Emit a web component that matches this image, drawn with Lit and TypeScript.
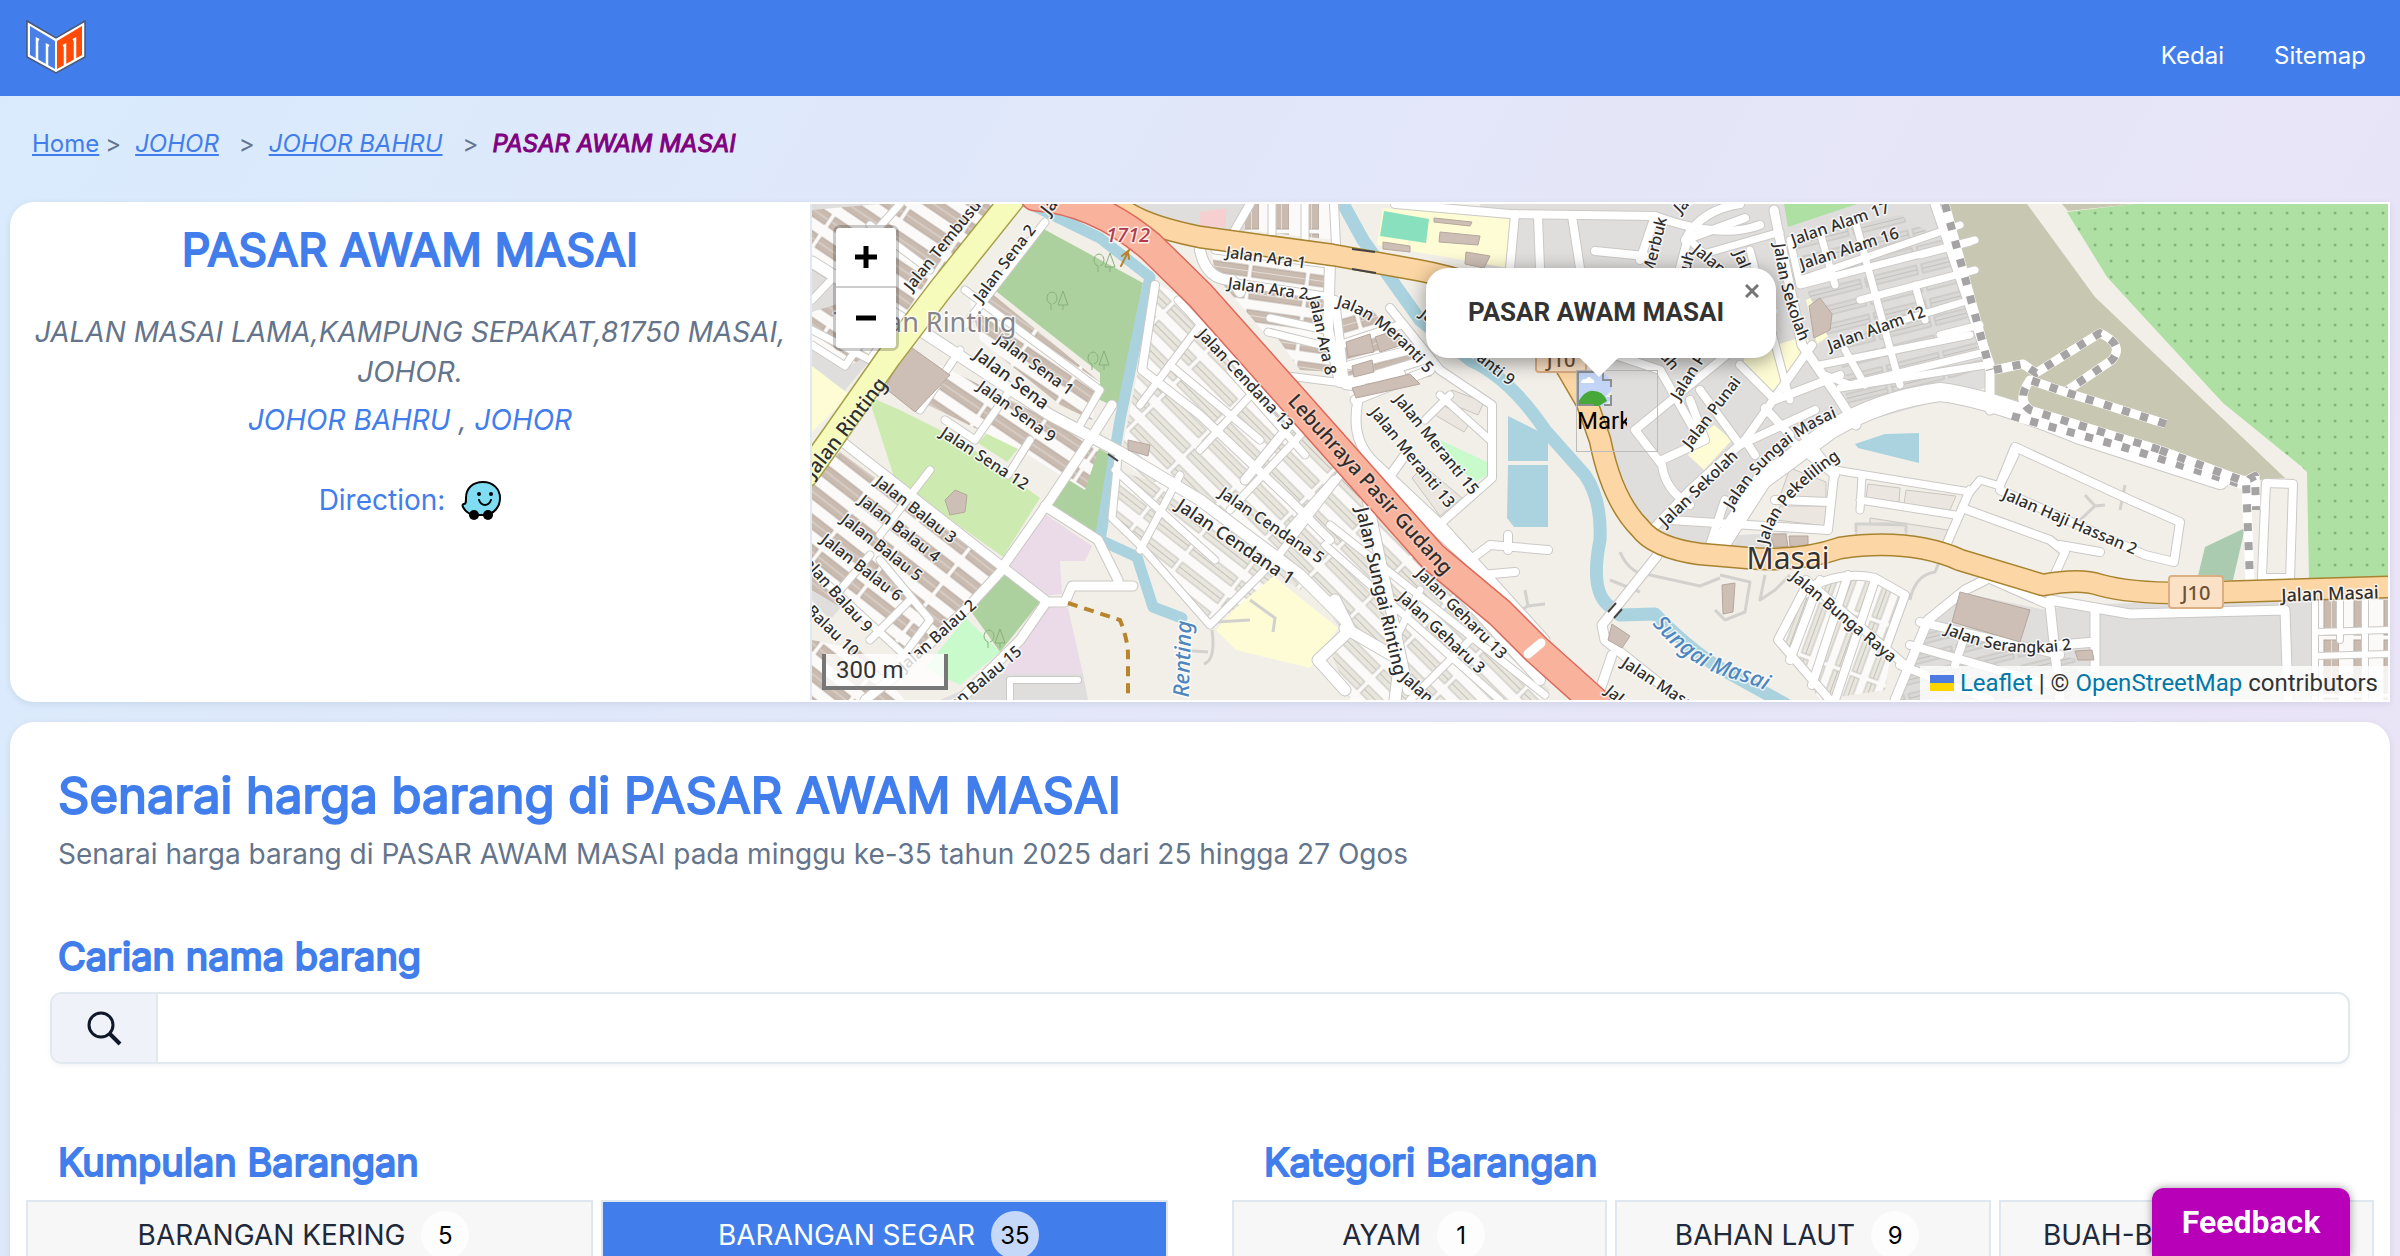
import { LitElement, html, svg, css } from "lit";
import { customElement, state } from "lit/decorators.js";

type Label = [text: string, x: number, y: number, angle: number, kind?: string];

/* Flat land-use areas: class name, polygon points */
const AREAS: [string, string][] = [
  ["resid", "1100,204 1245,204 1245,232 1150,222"],
  ["resid", "1480,204 1948,204 1990,365 1996,385 1852,425 1800,455 1700,545 1640,520 1608,440 1560,330 1480,300"],
  ["resid", "812,204 1000,204 812,430"],
  ["resid", "812,495 880,560 830,620 812,600"],
  ["school", "812,366 850,395 812,432"],
  ["grass", "868,396 900,410 960,440 1040,498 1003,557 895,480"],
  ["grass", "990,430 1012,418 1028,437 1007,462 978,443"],
  ["forest", "1040,227 1143,283 1118,408 1100,400 1100,373 992,288"],
  ["forest", "1088,442 1112,456 1098,535 1048,508"],
  ["forest", "1003,572 1040,602 1000,652 970,610"],
  ["park", "966,618 1000,652 960,685 925,668"],
  ["park", "857,572 880,582 877,595"],
  ["pink", "1045,514 1092,546 1085,561 1060,561 1062,594 1042,596 1010,566"],
  ["pink", "1042,606 1068,608 1083,674 1003,674"],
  ["resid", "940,700 1000,674 1083,674 1088,700"],
  ["school", "1383,208 1510,216 1508,268 1377,245"],
  ["pitch", "1384,211 1429,219 1426,243 1380,236"],
  ["school", "1272,575 1338,628 1310,668 1236,650 1216,630 1250,590"],
  ["school", "1745,355 1805,336 1812,345 1772,392 1742,370"],
  ["school", "1806,300 1835,288 1846,324 1817,344"],
  ["school", "1700,436 1714,425 1732,440 1704,470 1688,455"],
  ["park", "1440,440 1487,462 1487,475 1476,482 1450,462"],
  ["rose", "1200,212 1226,208 1226,227 1200,227"],
  ["orchard", "1784,204 1857,204 1788,227"],
  ["khaki", "1948,204 2027,204 2095,297 2285,478 2260,480 2012,412 1996,404 1990,363"],
  ["khaki", "2062,204 2133,204 2068,211"],
  ["orchard", "2067,212 2133,204 2388,204 2388,578 2309,580 2307,472 2302,467 2223,403 2107,277"],
  ["dots", "2067,212 2133,204 2388,204 2388,578 2309,580 2307,472 2302,467 2223,403 2107,277"],
  ["wood", "2205,547 2245,528 2233,580 2197,580"],
  ["water", "1508,416 1548,436 1548,461 1508,461"],
  ["water", "1508,465 1548,465 1548,527 1514,527 1507,518"],
  ["water", "1855,444 1885,434 1919,433 1919,463 1858,448"],
  ["resid", "1650,530 1740,535 1828,530 1828,500 1770,548 1660,545"],
  ["resid", "1930,625 1968,594 2046,610 2070,605 2388,595 2388,700 1895,700 1910,650"],
];

/* Housing rows drawn with striped fills */
const BLOCKS: [string, string][] = [
  ["rowsA", "812,210 880,204 995,204 900,325 812,270"],
  ["rowsA", "812,312 850,300 880,350 850,365 812,345"],
  ["rowsB", "840,452 1000,570 905,660 870,625 812,590 812,480"],
  ["rowsB", "812,640 860,650 905,700 812,700"],
  ["rowsA", "970,300 990,292 1100,382 1092,420 1060,405 980,340"],
  ["rowsA", "940,365 1100,445 1085,490 1020,450 928,405"],
  ["rowsC", "1212,253 1328,262 1320,345 1262,330 1215,275"],
  ["rowsC", "1265,320 1322,335 1334,372 1300,370"],
  ["rowsD", "1245,204 1338,204 1336,240 1245,230"],
  ["rowsE", "1335,310 1372,310 1432,376 1350,396"],
  ["rowsG", "1158,284 1195,306 1300,420 1362,494 1330,560 1300,590 1120,460 1142,350"],
  ["rowsG", "1330,505 1370,500 1550,690 1540,700 1350,700 1330,650 1342,630 1300,575"],
  ["rowsH", "1115,470 1180,490 1275,575 1212,628 1145,555 1112,520"],
  ["rowsI", "1795,240 1900,215 1958,250 1978,350 1850,385 1800,275"],
  ["rowsI", "1845,390 1980,350 1988,366 1850,415"],
  ["rowsJ", "1805,590 1850,575 1900,595 1885,690 1820,700 1778,640"],
  ["rowsI", "1915,640 1930,620 2000,640 2080,660 2070,700 1900,700"],
  ["rowsD", "2318,600 2388,600 2388,700 2318,700"],
];

/* Single footprints */
const BUILDINGS = [
  "885,388 908,345 950,375 915,412",
  "945,500 955,490 967,495 965,512 950,515",
  "1128,440 1150,445 1148,456 1128,450",
  "1770,534 1786,534 1788,547 1774,547",
  "1789,536 1808,536 1808,548 1790,546",
  "1722,585 1735,583 1733,612 1723,614",
  "1612,624 1630,636 1622,648 1608,640",
  "1960,592 2030,610 2020,642 1952,622",
  "1434,218 1472,222 1470,226 1434,222",
  "1440,232 1480,236 1478,245 1439,242",
  "1383,242 1410,246 1410,252 1383,249",
  "1466,252 1490,256 1484,268 1465,264",
  "1346,342 1370,334 1374,352 1348,357",
  "1375,337 1396,330 1402,345 1380,352",
  "1352,366 1372,360 1374,372 1354,377",
  "1352,388 1410,374 1420,384 1356,398",
  "1809,306 1820,298 1832,314 1830,330 1814,338",
  "2075,651 2092,650 2094,660 2078,660",
];

/* Open plots between the streets, outlined only */
const PLOTS = [
  "1442,400 1452,390 1484,402 1478,415",
  "1430,412 1440,404 1472,420 1464,432",
  "1412,478 1424,466 1462,498 1440,516",
  "1388,492 1398,484 1430,514 1420,520",
  "1868,484 1900,488 1899,502 1866,498",
  "1906,490 1956,496 1950,510 1904,504",
  "1870,518 1948,530 1942,544 1870,536",
  "1856,524 1906,526 1906,536 1856,536",
  "1790,468 1826,482 1826,498 1780,496",
  "1780,506 1826,506 1826,526 1776,520",
];

/* Minor roads: width, path */
const ROADS: [number, string][] = [
  [11, "M812 262 L920 330 L1050 415 L1120 452 L1200 500 L1300 575 L1345 620"],
  [9, "M840 440 L1004 568 L1045 600"],
  [9, "M1004 565 L1050 500 L1090 440 L1112 405"],
  [9, "M1045 506 L1098 540 L1118 580"],
  [9, "M1045 602 L1065 602 L1072 586 L1133 586"],
  [9, "M1004 568 L970 605 L900 672 L865 700"],
  [9, "M1045 604 L1020 640 L960 700"],
  [6, "M1012 680 L1078 680 M1010 680 L1010 700"],
  [7, "M900 204 L850 260 L812 300 M870 225 L930 270 M812 330 L870 360 L880 345"],
  [7, "M812 345 L845 366 L870 330"],
  [7, "M1045 222 L1000 280 L965 325 M965 290 L1100 390 L1080 425"],
  [7, "M960 350 L920 410 M1010 390 L975 440 L945 420 M1030 440 L1008 475"],
  [7, "M870 555 L840 590 M880 560 L930 620 L900 660 M910 600 L870 640"],
  [7, "M812 570 L910 660 M930 470 L880 535"],
  [8, "M1155 285 L1142 370 L1200 415 L1290 500 L1330 540"],
  [7, "M1200 325 L1140 405 M1260 385 L1200 450 M1305 430 L1230 510 M1340 475 L1275 560"],
  [7, "M1178 300 L1300 432 M1118 458 L1112 518 L1140 545 L1210 625 L1270 565"],
  [7, "M1230 370 L1305 455 M1170 365 L1260 440 M1115 470 L1215 560 M1180 475 L1140 550"],
  [10, "M1185 270 L1300 400 L1365 488 L1540 680"],
  [10, "M1365 488 L1408 690"],
  [7, "M1325 545 L1500 700 M1330 525 L1545 695 M1420 590 L1390 650 M1470 640 L1410 700"],
  [11, "M1335 600 L1350 630 L1318 660 L1345 690 M1345 628 L1400 660 L1395 700"],
  [9, "M1335 480 L1290 530 M1290 425 L1245 480"],
  [10, "M1200 250 Q1206 280 1232 280 L1240 292 M1330 262 L1328 330 L1340 382 L1400 374"],
  [7, "M1215 250 L1328 264 M1230 282 L1325 296 M1270 318 L1325 330 M1268 332 L1325 346"],
  [7, "M1240 330 L1280 375 L1335 382 M1272 204 L1272 235 M1305 204 L1305 240"],
  [8, "M1334 204 L1336 245 M1235 230 L1250 204"],
  [8, "M1335 300 L1345 385 L1380 390 M1340 345 L1400 325 M1350 365 L1418 348 M1345 384 L1424 360"],
  [8, "M1390 308 L1440 370 L1492 405 L1492 478 L1440 524"],
  [9, "M1358 400 Q1350 440 1374 462 L1440 524 M1430 370 L1355 400 M1405 455 L1380 490"],
  [7, "M1450 395 L1425 420 M1490 440 L1440 395"],
  [9, "M1440 524 L1545 640 M1372 470 L1470 562 L1500 592 M1545 640 L1530 625"],
  [8, "M1470 560 L1490 545 L1548 550 M1508 550 L1508 535 M1480 575 L1515 572"],
  [8, "M1395 204 L1510 214 L1655 216 Q1720 240 1760 225"],
  [8, "M1515 214 L1510 268 M1538 216 L1540 268 M1572 216 L1580 268 M1595 251 L1645 256"],
  [8, "M1655 216 L1640 260 M1685 240 Q1700 210 1740 204 M1685 240 L1745 218 M1688 238 L1680 268"],
  [7, "M1690 240 L1740 290 M1700 255 L1780 232 M1750 250 L1790 400"],
  [9, "M1774 210 L1780 240 L1802 345 L1840 400 L1856 425"],
  [7, "M1790 240 L1800 285 L1975 240 M1820 232 L1835 285 M1855 220 L1900 385 M1800 280 L1960 225"],
  [7, "M1860 300 L1975 270 M1915 285 L1925 320 M1870 330 L1970 300 M1820 365 L1970 335 M1845 350 L1865 385 M1825 375 L1850 385 L1985 352"],
  [7, "M1920 255 L1970 242 M1940 335 L1980 325 M1840 388 L1985 365"],
  [9, "M1935 204 L1990 365 L1990 410"],
  [18, "M1720 545 L1762 480 L1830 430 Q1880 400 1940 392 Q1990 398 2080 435 L2220 480"],
  [8, "M1600 350 L1660 370 L1700 440 M1812 345 L1745 440 L1690 490 L1650 532"],
  [8, "M1740 365 L1775 400 L1840 375 M1765 408 L1790 435 M1700 390 L1740 445 L1815 410"],
  [8, "M1635 430 L1690 385 L1745 340 M1635 430 L1662 465 Q1665 490 1690 505"],
  [8, "M1662 460 L1705 440 L1690 400 M1745 440 L1755 455 M1790 440 L1835 475"],
  [8, "M1670 520 L1828 530 L1834 475 L1800 430 M1710 545 L1725 500 M1775 500 L1830 502"],
  [7, "M1835 470 L1970 492 L1980 480 L2000 486 L2015 455 M1862 475 L1860 510 M1860 500 L1955 515"],
  [8, "M1970 490 L1945 548 M1962 508 L2050 540 L2065 552 L2050 585"],
  [8, "M2000 484 L2015 447 L2130 500 L2180 522 L2174 562 L2145 555 L2000 490 M2060 545 L2100 552"],
  [8, "M2262 575 L2266 483 L2293 484 L2290 580 M2262 578 L2290 578"],
  [9, "M1657 556 L1602 625 L1605 640 L1680 700 M1612 655 L1600 690"],
  [8, "M1804 590 Q1840 570 1875 578 L1905 595 L1885 650 M1804 590 L1778 640 L1830 700"],
  [8, "M1820 580 L1790 660 M1848 575 L1812 685 M1875 580 L1835 700 M1806 580 L1905 665"],
  [9, "M1985 580 L1965 590 L1928 620 L1895 700 M1982 575 L2050 605 L2060 700"],
  [8, "M1920 622 L2060 655 M1910 645 L2050 685 M1965 635 L1955 665 M1900 665 L1990 700"],
  [9, "M2050 600 L2130 614 L2285 610 L2288 700 M2095 610 L2095 700 M2060 645 L2095 642"],
  [6, "M2315 600 L2315 700 M2340 600 L2340 640 M2365 600 L2365 700 M2315 632 L2388 630 M2315 656 L2388 654"],
];

const RIVERS: [number, string][] = [
  [11, "M1026 202 L1100 238 L1150 277 L1140 323 L1120 420 L1100 540 L1137 557 L1153 607 L1182 618"],
  [13, "M1341 200 L1363 240 L1420 320 L1470 360 Q1510 378 1545 430 L1585 475 Q1602 500 1600 540 Q1590 590 1608 605 L1620 615 L1655 614 Q1690 650 1720 668 L1785 704"],
];

const DASHES: [string, string][] = [
  ["dirt", "M1068 603 L1120 620 Q1128 640 1128 655 L1128 700"],
  ["rail", "M1945 204 L1990 370"],
  ["rail", "M1994 370 L2023 364 L2036 373 L2100 333 Q2125 345 2112 360 L2065 392"],
  ["rail", "M2166 424 L2065 392 L2030 380 Q2016 400 2030 410 L2160 450"],
  ["rail", "M2012 416 L2120 446 L2240 484 L2255 476 L2256 510"],
  ["rail", "M2160 450 L2246 482 L2250 580"],
];

/* Footpaths and service ways */
const PATHS = [
  "M1620 552 Q1630 575 1650 575 L1700 586 L1720 578",
  "M1720 575 L1750 582 L1745 612 L1725 620 L1715 610",
  "M1610 580 L1640 592 M1765 575 L1760 600 L1775 590 L1790 575",
  "M1250 600 L1275 618 L1273 632 M1216 622 L1250 620",
  "M1525 590 L1528 606 L1545 604 M1528 606 L1518 612",
  "M2085 495 L2095 506 L2105 505 M2095 506 L2080 520 M2125 485 L2120 510",
  "M1212 630 Q1216 660 1204 664 M1180 650 L1208 652",
  "M1856 532 L1856 524 L1906 524 L1906 532",
  "M1910 600 Q1915 575 1935 572 L1940 560",
];

const HIGHWAY = "M1035 196 Q1095 200 1150 246 L1200 295 L1338 450 L1433 557 L1500 613 L1537 650 L1595 702";
const TRUNK = "M1118 206 Q1140 225 1200 237 L1333 255 L1417 270 Q1530 290 1562 360 L1587 403 L1600 440 Q1612 500 1640 528 Q1655 548 1700 554 L1747 558 Q1800 562 1840 548 Q1910 538 1960 560 L2043 585 Q2080 578 2100 585 Q2140 596 2223 592 L2390 587";
const RINTING = "M1012 200 L940 290 L889 357 L833 437 L806 475";

const LABELS: Label[] = [
  ["Jalan Tembusu", 942, 245, -51],
  ["Jalan Sena 2", 1004, 263, -53],
  ["Jalan Sena 1", 1035, 364, 36],
  ["Jalan Sena", 1012, 378, 37, "mid"],
  ["Jalan Sena 9", 1017, 411, 36],
  ["Jalan Sena 12", 985, 458, 33],
  ["Jalan Rinting", 845, 427, -52, "big"],
  ["Jalan Balau 3", 916, 509, 38],
  ["Jalan Balau 4", 900, 528, 38],
  ["Jalan Balau 5", 882, 547, 38],
  ["Jalan Balau 6", 862, 567, 38],
  ["Jalan Balau 9", 837, 593, 48],
  ["Jalan Balau 10", 818, 616, 44],
  ["Jalan Balau 2", 937, 635, -42],
  ["Jalan Balau 15", 978, 683, -40],
  ["Jalan Cendana 13", 1246, 379, 47],
  ["Jalan Cendana 5", 1272, 525, 34],
  ["Jalan Cendana 1", 1236, 541, 34, "mid"],
  ["Jalan Ara 1", 1266, 257, 8],
  ["Jalan Ara 2", 1268, 288, 8],
  ["Jalan Ara 8", 1323, 335, 78],
  ["Jalan Meranti 9", 1468, 346, 38],
  ["Jalan Meranti 15", 1437, 444, 51],
  ["Jalan Meranti 13", 1413, 457, 51],
  ["Jalan Sungai Rinting", 1382, 591, 77, "mid"],
  ["Jalan Geharu 13", 1462, 613, 45],
  ["Jalan Geharu 3", 1442, 632, 43],
  ["Jalan Geharu 1", 1445, 712, 42],
  ["Lebuhraya Pasir Gudang", 1371, 484, 48, "big"],
  ["Jalan Merbuk", 1649, 266, -76],
  ["Jalan Merpati", 1712, 174, -45],
  ["Jalan Subuh", 1677, 294, -74],
  ["Jalan Tekukur", 1735, 280, 40],
  ["Jalan Tiong", 1755, 290, 68],
  ["Jalan Tengah", 1645, 330, 50],
  ["Jalan Pipit", 1694, 366, -58],
  ["Jalan Punai", 1711, 412, -53],
  ["Jalan Alam 17", 1840, 223, -19],
  ["Jalan Alam 16", 1849, 248, -18],
  ["Jalan Alam 12", 1876, 328, -20],
  ["Jalan Sekolah", 1698, 488, -44],
  ["Jalan Bunga Raya", 1844, 616, 40],
  ["Jalan Masai", 1660, 684, 33],
  ["Jalan Lama", 1640, 715, 40],
  ["Jalan Haji Hassan 2", 2070, 521, 23],
  ["Jalan Masai", 2330, 593, -2, "mid"],
  ["Jalan Permas", 1078, 168, -52, "mid"],
  ["Renting", 1181, 659, -88, "river"],
  ["Taman Rinting", 925, 321, 0, "place"],
  ["1712", 1128, 234, 0, "ref"],
  ["Masai", 1788, 557, 0, "town"],
];

const CURVED: [id: string, path: string, text: string, kind?: string][] = [
  ["c1", "M1336 306 Q1378 316 1428 376", "Jalan Meranti 5"],
  ["c2", "M1774 244 Q1780 300 1808 360", "Jalan Sekolah"],
  ["c3", "M1732 510 Q1775 440 1840 416", "Jalan Sungai Masai"],
  ["c4", "M1768 545 Q1774 504 1838 460", "Jalan Pekeliling"],
  ["c5", "M1944 633 Q2010 664 2090 646", "Jalan Serangkai 2"],
  ["c6", "M1652 624 Q1690 668 1730 678 T1800 712", "Sungai Masai", "river"],
];

@customElement("market-map")
export class MarketMap extends LitElement {
  @state() private popupOpen = true;

  static styles = css`
    :host {
      display: block;
      position: relative;
      overflow: hidden;
      background: #f2efe9;
      font-family: Roboto, "Liberation Sans", sans-serif;
      color: #333;
    }
    .tiles { position: absolute; inset: 0; width: 100%; height: 100%; display: block; }
    .resid { fill: #dfdedd; }
    .school { fill: #fdfcd4; }
    .grass { fill: #cdebb0; }
    .forest { fill: #add19e; }
    .park { fill: #c8facc; }
    .pitch { fill: #88e0be; }
    .pink { fill: #ebdbe8; }
    .rose { fill: #f6d0d0; }
    .khaki { fill: #c8c7b2; }
    .orchard { fill: #aedfa3; }
    .dots { fill: url(#dots); }
    .wood { fill: #aacbaf; }
    .water { fill: #aad3df; }
    .building { fill: #cdbfb5; stroke: #b5a79d; stroke-width: 1; }
    .plot { fill: #ebe7e0; stroke: #c9c6c1; stroke-width: 1; }
    .path { fill: none; stroke: #d3d1ce; stroke-width: 3; stroke-linejoin: round; }
    .rowsA { fill: url(#rowsA); }
    .rowsB { fill: url(#rowsB); }
    .rowsC { fill: url(#rowsC); }
    .rowsD { fill: url(#rowsD); }
    .rowsE { fill: url(#rowsE); }
    .rowsG { fill: url(#rowsG); }
    .rowsH { fill: url(#rowsH); }
    .rowsI { fill: url(#rowsI); }
    .rowsJ { fill: url(#rowsJ); }
    .line { fill: none; stroke-linejoin: round; stroke-linecap: round; }
    .case { stroke: #cbc9c6; }
    .road { stroke: #fff; }
    .river-line { stroke: #aad3df; }
    .dirt { fill: none; stroke: #b8842c; stroke-width: 4; stroke-dasharray: 10 7; }
    .rail-base { fill: none; stroke: #fff; stroke-width: 9; stroke-linejoin: round; }
    .rail { fill: none; stroke: #a5a3a3; stroke-width: 8; stroke-dasharray: 8 11; stroke-linejoin: round; }
    .red-case { stroke: #dc6a5c; }
    .red { stroke: #f9b29c; }
    .orange-case { stroke: #a8832f; }
    .orange { stroke: #fcd6a4; }
    .yellow-case { stroke: #a5a14a; }
    .yellow { stroke: #f6fabb; }
    .tree { fill: none; stroke: #86b17a; stroke-width: 1; }
    text {
      font-family: "Noto Sans", "Open Sans", sans-serif;
      font-size: 16px;
      font-weight: 500;
      fill: #2e2e2e;
      stroke: #fff;
      stroke-opacity: 0.75;
      stroke-width: 3px;
      paint-order: stroke;
      stroke-linejoin: round;
      text-anchor: middle;
      dominant-baseline: central;
    }
    .along { text-anchor: start; dominant-baseline: auto; }
    .mid { font-size: 18px; }
    .big { font-size: 20px; stroke-opacity: 0.3; }
    .river { font-size: 22px; font-style: italic; fill: #4f86bd; }
    .place { font-size: 27px; font-weight: 400; fill: #85858c; }
    .town { font-size: 30px; font-weight: 400; fill: #333; }
    .ref { font-size: 20px; font-style: italic; fill: #b03a4c; }
    .shield { fill: #fbe1c6; stroke: #dcae84; stroke-width: 2; }
    .shield-text { font-size: 20px; fill: #6d5135; stroke: none; }

    .zoom {
      position: absolute; left: 21px; top: 21px;
      display: flex; flex-direction: column;
      border: 3px solid rgba(0, 0, 0, 0.2);
      border-radius: 7px; background-clip: padding-box;
    }
    .zoom button {
      width: 60px; height: 60px; padding: 0; border: 0; background: #fff;
      display: grid; place-items: center; cursor: pointer;
    }
    .zoom button:first-child { border-bottom: 2px solid #ccc; border-radius: 4px 4px 0 0; }
    .zoom button:last-child { border-radius: 0 0 4px 4px; }
    .scale {
      position: absolute; left: 10px; bottom: 10px; box-sizing: border-box;
      width: 126px; height: 36px; padding: 0 10px;
      border: 4px solid #777; border-top: 0;
      background: rgba(255, 255, 255, 0.8);
      font-size: 24px; line-height: 32px; color: #333;
    }
    .credit {
      position: absolute; right: 0; bottom: 0;
      display: flex; align-items: center; gap: 6px;
      padding: 0 10px; height: 34px;
      background: rgba(255, 255, 255, 0.8);
      font-size: 24px; line-height: 34px;
    }
    .credit a { color: #0078a8; text-decoration: none; }
    .marker {
      position: absolute; left: 50%; top: 166px; margin-left: -24px;
      box-sizing: border-box; width: 82px; height: 82px;
      border: 1px solid #bcbcbc; overflow: hidden;
      font-size: 24px; line-height: 28px; color: #000;
    }
    .marker svg { display: block; }
    .marker span { display: block; width: 50px; overflow: hidden; }
    .popup {
      position: absolute; left: 50%; top: 64px; margin-left: -174px;
      box-sizing: border-box; width: 350px; height: 90px;
      display: grid; place-items: center;
      padding: 0 10px 2px 0;
      border-radius: 22px; background: #fff;
      box-shadow: 0 4px 20px rgba(0, 0, 0, 0.4);
      font-size: 26px; font-weight: 700; color: #333;
    }
    .popup::after {
      content: ""; position: absolute; left: 153px; top: 89px;
      border: 20px solid transparent; border-top-color: #fff; border-bottom: 0;
    }
    .popup button {
      position: absolute; right: 7px; top: 6px; width: 34px; height: 34px;
      padding: 0; border: 0; background: none; display: grid; place-items: center; cursor: pointer;
    }
  `;

  private rows(id: string, angle: number, pitch: number, kind: "brown" | "pale" | "hatch") {
    const fill = kind === "brown" ? "#c9bbb0" : kind === "pale" ? "#e9e6de" : "#d9d8d6";
    const line = kind === "brown" ? "#b3a69c" : "#c2c0bb";
    const half = Math.round(pitch / 2);
    return svg`<pattern id=${id} width="58" height=${pitch} patternUnits="userSpaceOnUse" patternTransform="rotate(${angle})">
      <rect width="58" height=${pitch} fill=${kind === "hatch" ? "#dedddc" : "#fbfaf8"}></rect>
      <rect x="2" y="1" width="53" height=${half} fill=${fill} stroke=${line} stroke-width="1"></rect>
      <path d="M2 ${half / 2 + 1} H55" stroke=${kind === "brown" ? "#e4dcd6" : line} stroke-width="1"></path>
    </pattern>`;
  }

  private tree(x: number, y: number) {
    return svg`<path class="tree" d="M${x - 5} ${y + 8} v-6 a5 6 0 1 1 2 0 M${x + 7} ${y + 8} v-5 h-5 l5 -14 l5 14 h-5"></path>`;
  }

  render() {
    return html`
      <svg class="tiles" viewBox="812 204 1576 496" preserveAspectRatio="xMidYMid slice" role="img" aria-label="Peta Masai">
        <defs>
          ${this.rows("rowsA", 34, 24, "brown")}
          ${this.rows("rowsB", 38, 24, "brown")}
          ${this.rows("rowsC", 8, 22, "brown")}
          ${this.rows("rowsD", 90, 30, "brown")}
          ${this.rows("rowsE", -16, 26, "brown")}
          ${this.rows("rowsG", 45, 22, "pale")}
          ${this.rows("rowsH", 38, 22, "pale")}
          ${this.rows("rowsI", -14, 18, "hatch")}
          ${this.rows("rowsJ", 110, 18, "pale")}
          <pattern id="dots" x="2071" y="205" width="16" height="16" patternUnits="userSpaceOnUse">
            <circle cx="8" cy="8" r="1.5" fill="#83b57a"></circle>
          </pattern>
        </defs>
        ${AREAS.map(([k, p]) => svg`<polygon class=${k} points=${p}></polygon>`)}
        ${BLOCKS.map(([k, p]) => svg`<polygon class=${k} points=${p}></polygon>`)}
        ${PLOTS.map((p) => svg`<polygon class="plot" points=${p}></polygon>`)}
        ${PATHS.map((d) => svg`<path class="path" d=${d}></path>`)}
        ${RIVERS.map(([w, d]) => svg`<path class="line river-line" stroke-width=${w} d=${d}></path>`)}
        ${ROADS.map(([w, d]) => svg`<path class="line case" stroke-width=${w + 2} d=${d}></path>`)}
        ${ROADS.map(([w, d]) => svg`<path class="line road" stroke-width=${w} d=${d}></path>`)}
        ${BUILDINGS.map((p) => svg`<polygon class="building" points=${p}></polygon>`)}
        ${DASHES.map(([k, d]) =>
          k === "rail"
            ? svg`<path class="rail-base" d=${d}></path><path class="rail" d=${d}></path>`
            : svg`<path class=${k} d=${d}></path>`)}
        <path class="line yellow-case" stroke-width="26" d=${RINTING}></path>
        <path class="line yellow" stroke-width="23" d=${RINTING}></path>
        <path class="line orange-case" stroke-width="23" d=${TRUNK}></path>
        <path class="line orange" stroke-width="20" d=${TRUNK}></path>
        <path class="line red-case" stroke-width="31" d=${HIGHWAY}></path>
        <path class="line red" stroke-width="28" d=${HIGHWAY}></path>
        <path class="line road" stroke-width="9" d="M1528 654 L1541 643"></path>
        <path stroke="#444" stroke-width="2" d="M1352 249 L1375 252 M1352 269 L1376 273 M1608 612 L1616 603 M1614 618 L1622 609 M1108 454 L1118 461"></path>
        <path class="line" stroke="#b8842c" stroke-width="2" d="M1121 266 L1129 250 M1122 256 l6 -5 l1 8"></path>
        ${[[1056, 302], [1103, 264], [1097, 362], [993, 640]].map(([x, y]) => this.tree(x, y))}
        ${LABELS.map(([t, x, y, a, k]) =>
          svg`<text class=${k ?? "minor"} transform="translate(${x} ${y}) rotate(${a})">${t}</text>`)}
        ${CURVED.map(([id, d, t, k]) =>
          svg`<path id=${id} fill="none" d=${d}></path><text class="along ${k ?? "minor"}"><textPath href="#${id}">${t}</textPath></text>`)}
        <rect class="shield" x="2169" y="576" width="54" height="32" rx="3"></rect>
        <text class="shield-text" x="2196" y="592">J10</text>
        <rect class="shield" x="1536" y="344" width="50" height="28" rx="3"></rect>
        <text class="shield-text" x="1561" y="359">J10</text>
      </svg>
      <div class="marker">
        <svg width="36" height="36" viewBox="0 0 36 36" aria-hidden="true">
          <path d="M1 1 H26 L34 9 V35 H1 Z" fill="#c3d5f7"></path>
          <path d="M4 12 q0 -4 5 -4 q3 -4 6 0 q3 1 2 4 Z" fill="#fff"></path>
          <path d="M1 31 Q9 18 17 20 Q26 20 30 30 L22 35 H1 Z" fill="#47a83a"></path>
          <path d="M34 20 L28 26 L34 26 Z M34 29 L26 35 H34 Z" fill="#f2efe9"></path>
          <path d="M1 35 V1 H26 V9 H34 V16 M34 24 V34 H27 M1 34 H17" fill="none" stroke="#8b8e93" stroke-width="2"></path>
        </svg>
        <span>Marker</span>
      </div>
      ${this.popupOpen
        ? html`<div class="popup">
            PASAR AWAM MASAI
            <button type="button" aria-label="Close popup" @click=${() => (this.popupOpen = false)}>
              <svg width="14" height="14" viewBox="0 0 14 14"><path d="M1 1 L13 13 M13 1 L1 13" stroke="#757575" stroke-width="3"></path></svg>
            </button>
          </div>`
        : null}
      <div class="zoom">
        <button type="button" aria-label="Zoom in">
          <svg width="22" height="22" viewBox="0 0 22 22"><path d="M11 0 V22 M0 11 H22" stroke="#000" stroke-width="5"></path></svg>
        </button>
        <button type="button" aria-label="Zoom out">
          <svg width="20" height="6" viewBox="0 0 20 6"><path d="M0 3 H20" stroke="#000" stroke-width="5"></path></svg>
        </button>
      </div>
      <div class="scale">300 m</div>
      <div class="credit">
        <svg width="24" height="16" viewBox="0 0 24 16" aria-hidden="true"><path fill="#4c7be1" d="M0 0h24v8H0z"></path><path fill="#ffd500" d="M0 8h24v8H0z"></path></svg>
        <span><a href="#leaflet">Leaflet</a> | © <a href="#osm">OpenStreetMap</a> contributors</span>
      </div>
    `;
  }
}

@customElement("app-root")
export class AppRoot extends LitElement {
  @state() private group = "BARANGAN SEGAR";

  private groups: [string, number][] = [["BARANGAN KERING", 5], ["BARANGAN SEGAR", 35]];
  private categories: [string, number][] = [["AYAM", 1], ["BAHAN LAUT", 9], ["BUAH-BUAHAN", 6]];

  static styles = css`
    :host {
      --blue: #417eec;
      --slate: #64748b;
      --line: #e2e8f0;
      display: block; box-sizing: border-box;
      height: 100vh; overflow: hidden auto; scrollbar-width: none;
      font-family: Inter, "Liberation Sans", sans-serif;
      font-size: 24px; color: var(--slate);
      background: linear-gradient(120deg, #d8ebfd 0%, #e4e6f8 55%, #ebe3f6 100%);
    }
    a { color: var(--blue); }
    h1, h2, h3, p { margin: 0; }
    h1, h2, h3 { color: var(--blue); font-weight: 400; -webkit-text-stroke: 2px var(--blue); }
    header {
      display: flex; align-items: center; justify-content: space-between;
      height: 96px; padding: 0 34px 0 24px; background: var(--blue); box-sizing: border-box;
    }
    .logo { display: block; margin-bottom: 2px; }
    nav.top { display: flex; gap: 50px; margin-top: 16px; }
    nav.top a { color: #fff; text-decoration: none; line-height: 32px; }
    .crumbs { display: flex; align-items: center; padding: 32px 32px 42px; line-height: 32px; }
    .crumbs .sep { margin: 0 14px 0 6px; }
    .crumbs .wide { margin: 0 14px 0 20px; }
    .crumbs .here { color: #800080; -webkit-text-stroke: 1px #800080; font-style: italic; }
    .shop {
      display: grid; grid-template-columns: 800px 1fr;
      margin: 0 10px; height: 500px;
      background: #fff; border-radius: 24px 0 0 24px;
      box-shadow: 0 2px 6px rgba(100, 116, 139, 0.15);
    }
    .shop market-map { margin: 2px 2px 2px 0; border-left: 2px solid var(--line); }
    .info { display: flex; flex-direction: column; align-items: center; text-align: center; padding: 20px 16px; }
    .info h1 { font-size: 45px; line-height: 56px; }
    .info address { margin-top: 34px; font-size: 28px; line-height: 40px; }
    .info .area { font-size: 28px; line-height: 40px; margin-top: 8px; font-style: italic; }
    .info .area a { text-decoration: none; }
    .direction { display: flex; align-items: center; gap: 16px; margin-top: 40px; font-size: 28px; line-height: 40px; text-decoration: none; }
    main {
      margin: 20px 10px 0; padding: 42px 16px 80px; box-sizing: border-box;
      background: #fff; border-radius: 24px;
      box-shadow: 0 2px 6px rgba(100, 116, 139, 0.15);
    }
    main h2 { font-size: 49px; line-height: 64px; padding-left: 32px; }
    .lead { font-size: 28px; line-height: 40px; padding: 6px 32px 0; }
    h3 { font-size: 38px; line-height: 48px; padding-left: 32px; }
    .search-title { display: block; margin-top: 58px; }
    .search {
      display: flex; height: 72px; box-sizing: border-box; margin: 12px 24px 0;
      border: 2px solid var(--line); border-radius: 12px; overflow: hidden;
      box-shadow: 0 2px 4px rgba(100, 116, 139, 0.08);
    }
    .search button {
      width: 106px; border: 0; border-right: 2px solid var(--line); background: #eff3f9;
      display: grid; place-items: center; padding: 0; box-sizing: border-box;
    }
    .search input { flex: 1; border: 0; outline: 0; padding: 0 20px; font: inherit; background: transparent; }
    .filters { display: grid; grid-template-columns: 1fr 1fr; column-gap: 64px; margin-top: 74px; }
    .chips { display: grid; gap: 8px; margin-top: 14px; }
    .two { grid-template-columns: repeat(2, 1fr); }
    .three { grid-template-columns: repeat(3, 1fr); }
    .chip {
      display: flex; justify-content: center; align-items: center; gap: 16px;
      height: 76px; padding: 0 12px 6px 0; box-sizing: border-box;
      border: 2px solid #dfe7f0; background: #f7f7f7;
      font: 28px Inter, "Liberation Sans", sans-serif; color: #1e293b; cursor: pointer;
      white-space: nowrap;
    }
    .chip.on { background: var(--blue); color: #fff; }
    .badge {
      width: 48px; height: 48px; border-radius: 50%; display: grid; place-items: center;
      background: rgba(255, 255, 255, 0.7); font-size: 24px; color: #000;
    }
    .feedback {
      position: fixed; right: 50px; bottom: 0; width: 198px; height: 68px;
      border: 0; border-radius: 12px 12px 0 0; background: #b800b8; color: #fff;
      box-shadow: 0 0 8px rgba(0, 0, 0, 0.4);
      font: 700 32px Roboto, "Liberation Sans", sans-serif; cursor: pointer;
    }
  `;

  private chip([name, count]: [string, number]) {
    return html`<button type="button" class="chip ${name === this.group ? "on" : ""}" @click=${() => (this.group = name)}>
      ${name}<span class="badge">${count}</span>
    </button>`;
  }

  render() {
    return html`
      <header>
        <a href="#home" aria-label="Home">
          <svg class="logo" width="64" height="56" viewBox="0 0 64 56">
            <path d="M3 2 L32 19 L61 2 V38 L32 54 L3 38 Z" fill="#fff" stroke="#4b5878" stroke-width="1.5"></path>
            <path d="M6 7 L31 22 V50 L6 36 Z" fill="#4a80e6"></path>
            <path d="M33 22 L58 7 V36 L33 50 Z" fill="#ff4a08"></path>
            <path d="M13 41 V20 L15 21 M23 47 V26 L25 27 M41 47 V26 L39 27 M51 41 V20 L49 21" fill="none" stroke="#fff" stroke-width="2.5"></path>
          </svg>
        </a>
        <nav class="top"><a href="#kedai">Kedai</a><a href="#sitemap">Sitemap</a></nav>
      </header>
      <nav class="crumbs" aria-label="Breadcrumb">
        <a href="#home">Home</a><span class="sep">&gt;</span>
        <i><a href="#johor">JOHOR</a></i><span class="wide">&gt;</span>
        <i><a href="#jb">JOHOR BAHRU</a></i><span class="wide">&gt;</span>
        <span class="here">PASAR AWAM MASAI</span>
      </nav>
      <section class="shop">
        <div class="info">
          <h1>PASAR AWAM MASAI</h1>
          <address>JALAN MASAI LAMA,KAMPUNG SEPAKAT,81750 MASAI, JOHOR.</address>
          <p class="area"><a href="#jb">JOHOR BAHRU</a> , <a href="#johor">JOHOR</a></p>
          <a class="direction" href="#waze">Direction:
            <svg width="40" height="40" viewBox="0 0 40 40" aria-hidden="true">
              <path d="M5 18 C5 8 12 2 22 2 C32 2 39 9 39 18 C39 27 33 34 24 35 H13 C8 34 4 31 2 27 C1 25 2 24 3 24 C5 24 5 22 5 18 Z" fill="#7fdcf3" stroke="#000" stroke-width="2"></path>
              <circle cx="18" cy="14" r="2" fill="#000"></circle><circle cx="30" cy="14" r="2" fill="#000"></circle>
              <path d="M18 20 Q20 25 24 25 Q28 25 30 20" fill="none" stroke="#000" stroke-width="2" stroke-linecap="round"></path>
              <circle cx="13" cy="35" r="5"></circle><circle cx="27" cy="35" r="5"></circle>
            </svg>
          </a>
        </div>
        <market-map></market-map>
      </section>
      <main>
        <h2>Senarai harga barang di PASAR AWAM MASAI</h2>
        <p class="lead">Senarai harga barang di PASAR AWAM MASAI pada minggu ke-35 tahun 2025 dari 25 hingga 27 Ogos</p>
        <h3 class="search-title"><label for="q">Carian nama barang</label></h3>
        <div class="search">
          <button type="button" aria-label="Cari">
            <svg width="36" height="36" viewBox="0 0 36 36"><circle cx="15" cy="15" r="12" fill="none" stroke="#0f172a" stroke-width="3"></circle><path d="M23 23 L34 34" stroke="#0f172a" stroke-width="4"></path></svg>
          </button>
          <input id="q" type="text" />
        </div>
        <div class="filters">
          <section>
            <h3>Kumpulan Barangan</h3>
            <div class="chips two">${this.groups.map((g) => this.chip(g))}</div>
          </section>
          <section>
            <h3>Kategori Barangan</h3>
            <div class="chips three">${this.categories.map((c) => this.chip(c))}</div>
          </section>
        </div>
      </main>
      <button type="button" class="feedback">Feedback</button>
    `;
  }
}
